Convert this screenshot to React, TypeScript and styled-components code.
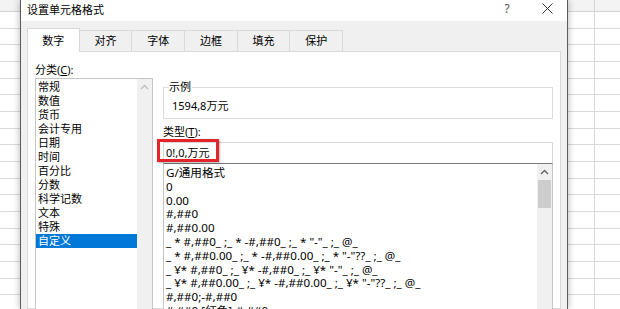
import React from 'react';
import styled, { createGlobalStyle } from 'styled-components';

const GlobalStyle = createGlobalStyle`
  *, *::before, *::after { box-sizing: border-box; }
  html, body { margin: 0; padding: 0; }
  body {
    width: 620px;
    height: 309px;
    overflow: hidden;
    background: #fff;
    font-family: "Noto Sans", "Noto Sans CJK SC", sans-serif;
    font-size: 11px;
    color: #000;
  }
`;

const Screen = styled.div`
  display: flex;
  width: 620px;
  height: 309px;
  overflow: hidden;
`;

// excel sheet visible behind the dialog
const Sheet = styled.div<{ $width?: number }>`
  flex: ${p => (p.$width ? `0 0 ${p.$width}px` : '1 1 auto')};
  display: flex;
  flex-direction: column;
  background: #fff;
`;

const SheetHeader = styled.div<{ $colAt?: number }>`
  height: 12px;
  background: #f3f3f3;
  border-bottom: 1px solid #d4d4d4;
  ${p =>
    p.$colAt
      ? `background-image: linear-gradient(to right, transparent ${p.$colAt - 1}px, #d4d4d4 ${p.$colAt - 1}px, #d4d4d4 ${p.$colAt}px, transparent ${p.$colAt}px);`
      : ''}
`;

const SheetRows = styled.div<{ $colAt?: number }>`
  flex: 1;
  background-image: ${p =>
      p.$colAt
        ? `linear-gradient(to right, transparent ${p.$colAt - 1}px, #dadada ${p.$colAt - 1}px, #dadada ${p.$colAt}px, transparent ${p.$colAt}px),`
        : ''}
    repeating-linear-gradient(to bottom, transparent 0, transparent 15.67px, #dadada 15.67px, #dadada 16.67px);
`;

const Dialog = styled.div`
  flex: 0 0 548px;
  display: flex;
  flex-direction: column;
  background: #f0f0f0;
  border-left: 1px solid #5c5c5c;
  border-right: 1px solid #5c5c5c;
  box-shadow: 0 0 7px rgba(0, 0, 0, 0.3);
  position: relative;
  z-index: 1;
`;

const TitleBar = styled.div`
  height: 21px;
  display: flex;
  align-items: center;
  background: #fff;
`;

const Title = styled.div`
  flex: 1;
  padding-left: 6px;
  line-height: 14px;
  margin-top: -2px;
`;

const TitleButton = styled.div`
  width: 40px;
  height: 21px;
  display: flex;
  align-items: center;
  justify-content: center;
  color: #555;
  font-size: 12px;
  margin-top: -4px;
`;

const Body = styled.div`
  flex: 1;
  display: flex;
  flex-direction: column;
  padding: 7px 6px 0;
  min-height: 0;
`;

const TabRow = styled.div`
  height: 23px;
  display: flex;
  align-items: flex-end;
  position: relative;
  z-index: 1;
`;

const Tab = styled.div<{ $active?: boolean }>`
  width: 52.7px;
  height: ${p => (p.$active ? 24 : 21)}px;
  margin-bottom: ${p => (p.$active ? -1 : 0)}px;
  display: flex;
  align-items: center;
  justify-content: center;
  background: ${p => (p.$active ? '#fff' : '#f0f0f0')};
  border: 1px solid #d9d9d9;
  border-bottom: none;
  border-left: ${p => (p.$active ? '1px solid #d9d9d9' : 'none')};
  line-height: 14px;
`;

const Panel = styled.div`
  flex: 1;
  min-height: 0;
  background: #fff;
  border: 1px solid #d9d9d9;
  padding: 11px 7px 0;
  display: grid;
  grid-template-columns: 118px 390px;
  column-gap: 10px;
  align-items: start;
`;

const Column = styled.div<{ $top?: number }>`
  display: flex;
  flex-direction: column;
  margin-top: ${p => p.$top ?? 0}px;
`;

const Label = styled.div<{ $gap?: number }>`
  line-height: 14px;
  height: 14px;
  margin-top: ${p => p.$gap ?? 0}px;

  u {
    text-underline-offset: 1px;
  }
`;

const ListBox = styled.div<{ $height: number }>`
  height: ${p => p.$height}px;
  display: flex;
  background: #fff;
  border: 1px solid #c6c6c6;
`;

const CategoryBox = styled(ListBox)`
  margin-top: 1px;
`;

const FormatBox = styled(ListBox)`
  border-top: none;
`;

const Items = styled.div<{ $rowHeight: number; $padTop: number; $size?: number }>`
  flex: 1;
  padding-top: ${p => p.$padTop}px;
  overflow: hidden;
  font-size: ${p => p.$size ?? 11}px;

  & > div {
    line-height: ${p => p.$rowHeight}px;
    height: ${p => p.$rowHeight}px;
    white-space: pre;
  }
`;

const Item = styled.div<{ $selected?: boolean }>`
  padding-left: 2px;
  background: ${p => (p.$selected ? '#0078d7' : 'transparent')};
  color: ${p => (p.$selected ? '#fff' : '#000')};
`;

const ScrollTrack = styled.div`
  width: 15px;
  background: #f0f0f0;
  display: flex;
  flex-direction: column;
  align-items: center;
`;

const ScrollArrow = styled.div`
  height: 16px;
  display: flex;
  align-items: center;
  justify-content: center;
`;

const ScrollThumb = styled.div`
  width: 13px;
  height: 28px;
  background: #cdcdcd;
`;

const Sample = styled.fieldset`
  margin: 0;
  min-width: 0;
  border: 1px solid #dcdcdc;
  padding: 5px 0 5px 4px;
`;

const SampleLegend = styled.legend`
  padding: 0 1px;
  line-height: 14px;
  font-size: 11px;
`;

const SampleValue = styled.div`
  padding-left: 4px;
  line-height: 14px;
`;

const InputWrap = styled.div`
  position: relative;
  margin-top: 3px;
`;

const TextInput = styled.div`
  height: 22px;
  border: 1px solid #d7d7d7;
  border-bottom-color: #7a7a7a;
  padding-left: 2px;
  line-height: 20px;
  background: #fff;
`;

const Highlight = styled.div`
  position: absolute;
  left: -6px;
  top: -3px;
  width: 62px;
  height: 23px;
  border: 3px solid #e3252b;
  box-shadow: 1px 1px 2px rgba(0, 0, 0, 0.3);
  pointer-events: none;
`;

const Chevron = ({ color }: { color: string }) => (
  <svg width="9" height="6" viewBox="0 0 9 6">
    <path d="M1 5 L4.5 1.5 L8 5" fill="none" stroke={color} strokeWidth="1.3" />
  </svg>
);

const CloseIcon = () => (
  <svg width="11" height="11" viewBox="0 0 11 11">
    <path d="M0.5 0.5 L10.5 10.5 M10.5 0.5 L0.5 10.5" stroke="#333" strokeWidth="1" />
  </svg>
);

const tabs = ['数字', '对齐', '字体', '边框', '填充', '保护'];

const categories = [
  '常规', '数值', '货币', '会计专用', '日期', '时间',
  '百分比', '分数', '科学记数', '文本', '特殊', '自定义',
];

const formats = [
  'G/通用格式',
  '0',
  '0.00',
  '#,##0',
  '#,##0.00',
  '_ * #,##0_ ;_ * -#,##0_ ;_ * "-"_ ;_ @_',
  '_ * #,##0.00_ ;_ * -#,##0.00_ ;_ * "-"??_ ;_ @_',
  '_ ¥* #,##0_ ;_ ¥* -#,##0_ ;_ ¥* "-"_ ;_ @_',
  '_ ¥* #,##0.00_ ;_ ¥* -#,##0.00_ ;_ ¥* "-"??_ ;_ @_',
  '#,##0;-#,##0',
  '#,##0;[红色]-#,##0',
];

export default function App() {
  return (
    <>
      <GlobalStyle />
      <Screen>
        <Sheet $width={20}>
          <SheetHeader />
          <SheetRows />
        </Sheet>

        <Dialog>
          <TitleBar>
            <Title>设置单元格格式</Title>
            <TitleButton>?</TitleButton>
            <TitleButton><CloseIcon /></TitleButton>
          </TitleBar>

          <Body>
            <TabRow>
              {tabs.map((t, i) => (
                <Tab key={t} $active={i === 0}>{t}</Tab>
              ))}
            </TabRow>

            <Panel>
              <Column>
                <Label>分类(<u>C</u>):</Label>
                <CategoryBox $height={240}>
                  <Items $rowHeight={14} $padTop={1}>
                    {categories.map(c => (
                      <Item key={c} $selected={c === '自定义'}>{c}</Item>
                    ))}
                  </Items>
                  <ScrollTrack>
                    <ScrollArrow><Chevron color="#bfbfbf" /></ScrollArrow>
                  </ScrollTrack>
                </CategoryBox>
              </Column>

              <Column $top={17}>
                <Sample>
                  <SampleLegend>示例</SampleLegend>
                  <SampleValue>1594,8万元</SampleValue>
                </Sample>

                <Label $gap={6}>类型(<u>T</u>):</Label>
                <InputWrap>
                  <TextInput>0!,0,万元</TextInput>
                  <Highlight />
                </InputWrap>

                <FormatBox $height={160}>
                  <Items $rowHeight={13.8} $padTop={2} $size={11.6}>
                    {formats.map(f => (
                      <Item key={f}>{f}</Item>
                    ))}
                  </Items>
                  <ScrollTrack>
                    <ScrollArrow><Chevron color="#606060" /></ScrollArrow>
                    <ScrollThumb />
                  </ScrollTrack>
                </FormatBox>
              </Column>
            </Panel>
          </Body>
        </Dialog>

        <Sheet>
          <SheetHeader $colAt={27} />
          <SheetRows $colAt={27} />
        </Sheet>
      </Screen>
    </>
  );
}
